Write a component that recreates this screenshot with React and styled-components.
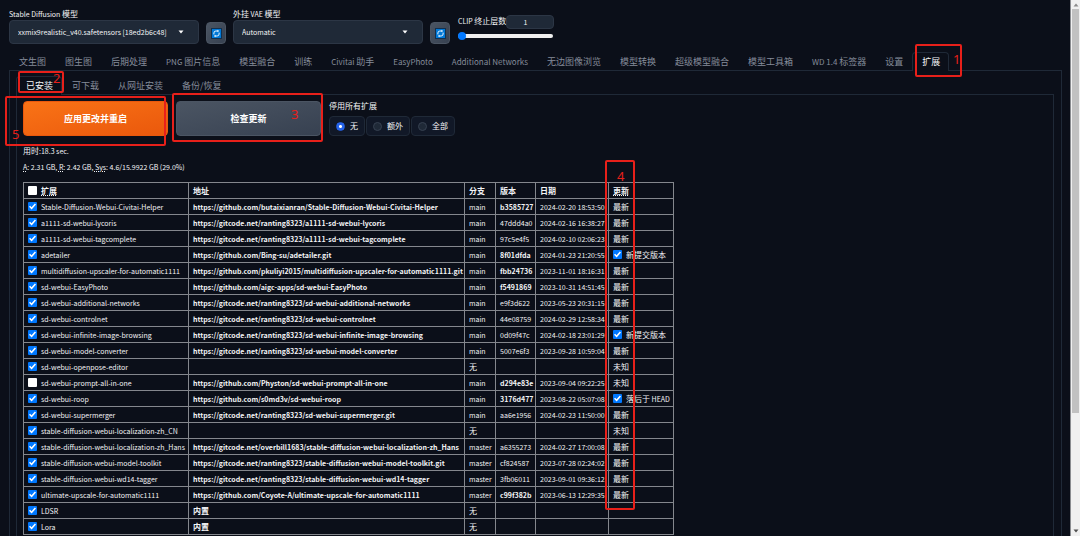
import React, { useState } from 'react';
import styled, { createGlobalStyle, css } from 'styled-components';

const MAIN_TABS = [
  '文生图', '图生图', '后期处理', 'PNG 图片信息', '模型融合', '训练', 'Civitai 助手',
  'EasyPhoto', 'Additional Networks', '无边图像浏览', '模型转换', '超级模型融合',
  '模型工具箱', 'WD 1.4 标签器', '设置', '扩展',
];

const SUB_TABS = ['已安装', '可下载', '从网址安装', '备份/恢复'];

const DISABLE_OPTIONS = ['无', '额外', '全部'];

const COLUMNS = [165, 276, 31, 40, 73, 65];

const GITCODE = 'https://gitcode.net/ranting8323/';

const EXTENSIONS = [
  { name: 'Stable-Diffusion-Webui-Civitai-Helper', url: 'https://github.com/butaixianran/Stable-Diffusion-Webui-Civitai-Helper', branch: 'main', version: 'b3585727', bold: true, date: '2024-02-20 18:53:50', status: '最新' },
  { name: 'a1111-sd-webui-lycoris', url: `${GITCODE}a1111-sd-webui-lycoris`, branch: 'main', version: '47ddd4a0', date: '2024-02-16 16:38:27', status: '最新' },
  { name: 'a1111-sd-webui-tagcomplete', url: `${GITCODE}a1111-sd-webui-tagcomplete`, branch: 'main', version: '97c5e4f5', date: '2024-02-10 02:06:23', status: '最新' },
  { name: 'adetailer', url: 'https://github.com/Bing-su/adetailer.git', branch: 'main', version: '8f01dfda', bold: true, date: '2024-01-23 21:20:55', status: '新提交版本', update: true },
  { name: 'multidiffusion-upscaler-for-automatic1111', url: 'https://github.com/pkuliyi2015/multidiffusion-upscaler-for-automatic1111.git', branch: 'main', version: 'fbb24736', bold: true, date: '2023-11-01 18:16:31', status: '最新' },
  { name: 'sd-webui-EasyPhoto', url: 'https://github.com/aigc-apps/sd-webui-EasyPhoto', branch: 'main', version: 'f5491869', bold: true, date: '2023-10-31 14:51:45', status: '最新' },
  { name: 'sd-webui-additional-networks', url: `${GITCODE}sd-webui-additional-networks`, branch: 'main', version: 'e9f3d622', date: '2023-05-23 20:31:15', status: '最新' },
  { name: 'sd-webui-controlnet', url: `${GITCODE}sd-webui-controlnet`, branch: 'main', version: '44e08759', date: '2024-02-29 12:58:34', status: '最新' },
  { name: 'sd-webui-infinite-image-browsing', url: `${GITCODE}sd-webui-infinite-image-browsing`, branch: 'main', version: '0d09f47c', date: '2024-02-18 23:01:29', status: '新提交版本', update: true },
  { name: 'sd-webui-model-converter', url: `${GITCODE}sd-webui-model-converter`, branch: 'main', version: '5007e6f3', date: '2023-09-28 10:59:04', status: '最新' },
  { name: 'sd-webui-openpose-editor', branch: '无', status: '未知' },
  { name: 'sd-webui-prompt-all-in-one', disabled: true, url: 'https://github.com/Physton/sd-webui-prompt-all-in-one', branch: 'main', version: 'd294e83e', bold: true, date: '2023-09-04 09:22:25', status: '未知' },
  { name: 'sd-webui-roop', url: 'https://github.com/s0md3v/sd-webui-roop', branch: 'main', version: '3176d477', bold: true, date: '2023-08-22 05:07:08', status: '落后于 HEAD', update: true },
  { name: 'sd-webui-supermerger', url: `${GITCODE}sd-webui-supermerger.git`, branch: 'main', version: 'aa6e1956', date: '2024-02-23 11:50:00', status: '最新' },
  { name: 'stable-diffusion-webui-localization-zh_CN', branch: '无', status: '未知' },
  { name: 'stable-diffusion-webui-localization-zh_Hans', url: 'https://gitcode.net/overbill1683/stable-diffusion-webui-localization-zh_Hans', branch: 'master', version: 'a6355273', date: '2024-02-27 17:00:08', status: '最新' },
  { name: 'stable-diffusion-webui-model-toolkit', url: `${GITCODE}stable-diffusion-webui-model-toolkit.git`, branch: 'master', version: 'cf824587', date: '2023-07-28 02:24:02', status: '最新' },
  { name: 'stable-diffusion-webui-wd14-tagger', url: `${GITCODE}stable-diffusion-webui-wd14-tagger`, branch: 'master', version: '3fb06011', date: '2023-09-01 09:36:12', status: '最新' },
  { name: 'ultimate-upscale-for-automatic1111', url: 'https://github.com/Coyote-A/ultimate-upscale-for-automatic1111', branch: 'master', version: 'c99f382b', bold: true, date: '2023-06-13 12:29:35', status: '最新' },
  { name: 'LDSR', builtin: true, branch: '无' },
  { name: 'Lora', builtin: true, branch: '无' },
];

// numbered callouts drawn over the page
const MARKS = [
  { n: 1, x: 915, y: 44, w: 47, h: 33, nx: 36, ny: 5 },
  { n: 2, x: 18, y: 71, w: 46, h: 22, nx: 33, ny: -3 },
  { n: 3, x: 172, y: 93, w: 151, h: 49, nx: 117, ny: 11 },
  { n: 4, x: 605, y: 160, w: 30, h: 350, nx: 10, ny: 6 },
  { n: 5, x: 5, y: 96, w: 161, h: 50, nx: 5, ny: 28 },
];

// latin runs are set one step smaller than the hanzi beside them
function Mixed({ text, size = 7 }) {
  return text
    .split(/([\x20-\x7e]+)/)
    .filter(Boolean)
    .map((part, i) => (
      /^[\x20-\x7e]/.test(part) ? <Latin key={i} $size={size}>{part}</Latin> : part
    ));
}

function SelectField({ id, label, value }) {
  return (
    <Field>
      <FieldLabel htmlFor={id}><Mixed text={label} /></FieldLabel>
      <SelectBox>
        <Select id={id} defaultValue={value}>
          <option>{value}</option>
        </Select>
        <Caret viewBox='0 0 6 4'>
          <path d='M0.5 0.5h5L3 3.5z' fill='#fff' />
        </Caret>
      </SelectBox>
    </Field>
  );
}

function RefreshButton() {
  return (
    <ToolButton aria-label='刷新'>
      <svg width='11' height='11' viewBox='0 0 11 11' fill='none'>
        <rect x='0.5' y='0.5' width='10' height='10' fill='#0078d7' stroke='#12304f' />
        <path d='M2.9 6.4V5a2 2 0 0 1 2-2H7' stroke='#fff' strokeWidth='0.9' />
        <path d='M8.1 4.6V6a2 2 0 0 1-2 2H4' stroke='#fff' strokeWidth='0.9' />
        <path d='M6.5 1.8L8.1 3 6.5 4.2zM4.5 6.8L2.9 8l1.6 1.2z' fill='#fff' />
      </svg>
    </ToolButton>
  );
}

function ExtensionRow({ item }) {
  const Version = item.bold ? 'b' : 'span';

  return (
    <tr>
      <Cell>
        <CheckLabel>
          <Checkbox type='checkbox' defaultChecked={!item.disabled} />
          <Mixed text={item.name} />
        </CheckLabel>
      </Cell>
      <Cell $small={!item.builtin}>
        {item.url && <Link href={item.url}>{item.url}</Link>}
        {item.builtin && <b>内置</b>}
      </Cell>
      <Cell $small={item.branch !== '无'}>{item.branch}</Cell>
      <Cell $small>{item.version && <Version>{item.version}</Version>}</Cell>
      <Cell $small>{item.date}</Cell>
      <Cell>
        {item.update ? (
          <CheckLabel>
            <Checkbox type='checkbox' defaultChecked />
            <span><Mixed text={item.status} /></span>
          </CheckLabel>
        ) : item.status}
      </Cell>
    </tr>
  );
}

export default function App() {
  const [mainTab, setMainTab] = useState('扩展');
  const [subTab, setSubTab] = useState('已安装');

  return (
    <Page>
      <GlobalStyle />
      <Main>
        <QuickSettings>
          <SelectField
            id='checkpoint'
            label='Stable Diffusion 模型'
            value='xxmix9realistic_v40.safetensors [18ed2b6c48]'
          />
          <RefreshButton />
          <SelectField id='vae' label='外挂 VAE 模型' value='Automatic' />
          <RefreshButton />
          <ClipField>
            <ClipHead>
              <FieldLabel htmlFor='clip'><Mixed text='CLIP 终止层数' /></FieldLabel>
              <NumberInput id='clip' defaultValue='1' />
            </ClipHead>
            <Slider type='range' min='1' max='12' defaultValue='1' aria-label='CLIP 终止层数' />
          </ClipField>
        </QuickSettings>
        <TabList role='tablist'>
          {MAIN_TABS.map((tab) => (
            <Tab
              key={tab}
              role='tab'
              aria-selected={tab === mainTab}
              $active={tab === mainTab}
              onClick={() => setMainTab(tab)}
            >
              <Mixed text={tab} size={8} />
            </Tab>
          ))}
        </TabList>
        <OuterPanel>
          <TabList role='tablist'>
            {SUB_TABS.map((tab) => (
              <Tab
                key={tab}
                role='tab'
                aria-selected={tab === subTab}
                $active={tab === subTab}
                onClick={() => setSubTab(tab)}
              >
                {tab}
              </Tab>
            ))}
          </TabList>
          <InnerPanel>
            <Actions>
              <ActionButton $primary>应用更改并重启</ActionButton>
              <ActionButton>检查更新</ActionButton>
              <RadioGroup>
                <Legend>停用所有扩展</Legend>
                <RadioRow>
                  {DISABLE_OPTIONS.map((option, i) => (
                    <RadioLabel key={option}>
                      <Radio type='radio' name='disable' defaultChecked={i === 0} />
                      {option}
                    </RadioLabel>
                  ))}
                </RadioRow>
              </RadioGroup>
            </Actions>
            <Stats>
              <p><Mixed text='用时:18.3 sec.' /></p>
              <p>
                <Latin $size={7}>
                  <abbr>A</abbr>: 2.31 GB, <abbr>R</abbr>: 2.42 GB, <abbr>Sys</abbr>: 4.6/15.9922 GB (29.0%)
                </Latin>
              </p>
            </Stats>
            <Table>
              <colgroup>
                {COLUMNS.map((width, i) => <Col key={i} $width={width} />)}
              </colgroup>
              <thead>
                <tr>
                  <HeadCell>
                    <CheckLabel>
                      <Checkbox type='checkbox' />
                      <abbr>扩展</abbr>
                    </CheckLabel>
                  </HeadCell>
                  <HeadCell>地址</HeadCell>
                  <HeadCell>分支</HeadCell>
                  <HeadCell>版本</HeadCell>
                  <HeadCell>日期</HeadCell>
                  <HeadCell><abbr>更新</abbr></HeadCell>
                </tr>
              </thead>
              <tbody>
                {EXTENSIONS.map((item) => <ExtensionRow key={item.name} item={item} />)}
              </tbody>
            </Table>
          </InnerPanel>
        </OuterPanel>
      </Main>
      <ScrollBar>
        <Arrow viewBox='0 0 6 4'><path d='M0.5 3.5L3 0.5l2.5 3z' fill='#8b8b8b' /></Arrow>
        <Track><Thumb /></Track>
        <Arrow viewBox='0 0 6 4'><path d='M0.5 0.5L3 3.5l2.5-3z' fill='#505050' /></Arrow>
      </ScrollBar>
      {MARKS.map((mark) => (
        <Mark key={mark.n} $mark={mark}>
          <span>{mark.n}</span>
        </Mark>
      ))}
    </Page>
  );
}

const GlobalStyle = createGlobalStyle`
  * {
    box-sizing: border-box;
  }

  body {
    margin: 0;
    background: #0b0f19;
    color: #f3f4f6;
    font-family: 'Noto Sans CJK SC', sans-serif;
    font-size: 8px;
    line-height: 12px;
  }

  button,
  input,
  select {
    margin: 0;
    color: inherit;
    font: inherit;
  }

  abbr {
    text-decoration: underline dotted 1px;
    text-underline-offset: 1px;
  }
`;

const Page = styled.div`
  position: relative;
  display: flex;
  height: 100vh;
  overflow: hidden;
`;

const Main = styled.main`
  display: flex;
  flex: 1;
  flex-direction: column;
  min-width: 0;
  padding: 8px 8px 0 9px;
`;

const Latin = styled.span`
  font-size: ${({ $size }) => $size}px;
  white-space: pre;
`;

const QuickSettings = styled.div`
  display: flex;
  align-items: flex-end;
  gap: 7px;
  margin-bottom: 8px;
`;

const Field = styled.div`
  display: flex;
  flex-direction: column;
  width: 190px;
`;

const FieldLabel = styled.label`
  white-space: nowrap;
`;

const SelectBox = styled.div`
  position: relative;
`;

const Select = styled.select`
  display: block;
  width: 100%;
  height: 24px;
  padding: 0 8px;
  border: 1px solid #2c3645;
  border-radius: 4px;
  background: #1f2937;
  font-size: 7px;
  appearance: none;
`;

const Caret = styled.svg`
  position: absolute;
  top: 10px;
  right: 15px;
  width: 6px;
  height: 4px;
`;

const ToolButton = styled.button`
  display: flex;
  align-items: center;
  justify-content: center;
  width: 20px;
  height: 22px;
  padding: 0;
  border: 1px solid #4b5563;
  border-radius: 4px;
  background: linear-gradient(to bottom right, #4b5563, #374151);
`;

const ClipField = styled.div`
  display: flex;
  flex-direction: column;
  align-self: stretch;
  width: 97px;
  padding: 7px 0 0 1px;
`;

const ClipHead = styled.div`
  display: flex;
  justify-content: space-between;
  height: 14px;
`;

const NumberInput = styled.input`
  flex: none;
  width: 48px;
  height: 14px;
  padding: 0 10px 0 0;
  border: 1px solid #2c3645;
  border-radius: 4px;
  background: #1f2937;
  font-size: 7px;
  text-align: center;
`;

const Slider = styled.input`
  width: 95px;
  height: 8px;
  margin-top: 3px;
  background: none;
  appearance: none;

  &::-webkit-slider-runnable-track {
    height: 4px;
    border-radius: 2px;
    background: #efefef;
  }

  &::-webkit-slider-thumb {
    width: 8px;
    height: 8px;
    margin-top: -2px;
    border-radius: 50%;
    background: #0078ff;
    appearance: none;
  }
`;

const TabList = styled.div`
  display: flex;
`;

const Tab = styled.button`
  flex: none;
  height: 19px;
  margin-bottom: -1px;
  padding: 0 8px 0 9px;
  border: 1px solid transparent;
  border-bottom: 0;
  border-radius: 4px 4px 0 0;
  background: none;
  color: #858c99;
  font-size: 9px;
  white-space: nowrap;

  ${({ $active }) => $active && css`
    z-index: 1;
    border-color: #1f2937;
    background: #0b0f19;
    color: #f3f4f6;
  `}
`;

const OuterPanel = styled.section`
  flex: 1;
  padding: 5px 7px 0 6px;
  border: 1px solid #1f2937;
  border-bottom: 0;
`;

const InnerPanel = styled.section`
  height: 100%;
  padding: 6px;
  border: 1px solid #1f2937;
  border-bottom: 0;
`;

const Actions = styled.div`
  display: flex;
  gap: 8px;
`;

const ActionButton = styled.button`
  width: 145px;
  height: 35px;
  border: 1px solid ${({ $primary }) => ($primary ? '#ea580c' : '#4b5563')};
  border-radius: 4px;
  background: ${({ $primary }) => ($primary
    ? 'linear-gradient(to bottom right, #f97316, #ea580c)'
    : 'linear-gradient(to bottom right, #4b5563, #374151)')};
  color: #fff;
  font-size: 9px;
  font-weight: 700;
`;

const RadioGroup = styled.fieldset`
  margin: 0;
  padding: 0;
  border: 0;
`;

const Legend = styled.legend`
  margin-bottom: 5px;
  padding: 0;
  line-height: 10px;
`;

const RadioRow = styled.div`
  display: flex;
  gap: 1px;
`;

const RadioLabel = styled.label`
  display: flex;
  align-items: center;
  gap: 5px;
  height: 20px;
  padding: 0 6px;
  border: 1px solid #1f2937;
  border-radius: 4px;
  background: #111827;
`;

const Radio = styled.input`
  width: 9px;
  height: 9px;
  border: 1px solid #374151;
  border-radius: 50%;
  background: #1f2937;
  appearance: none;

  &:checked {
    border-color: #2563eb;
    background: radial-gradient(circle, #fff 0 1px, #2563eb 2px);
  }
`;

const Stats = styled.div`
  margin: 7px 0;
  line-height: 16px;

  p {
    height: 16px;
    margin: 0;
  }
`;

const Table = styled.table`
  width: 650px;
  border-collapse: collapse;
  table-layout: fixed;
`;

const Col = styled.col`
  width: ${({ $width }) => $width}px;
`;

const Cell = styled.td`
  height: 16px;
  padding: 0 0 0 4px;
  border: 1px solid #84878d;
  font-size: ${({ $small }) => ($small ? 7 : 8)}px;
  line-height: 14px;
  white-space: nowrap;
`;

const HeadCell = styled(Cell).attrs({ as: 'th' })`
  font-weight: 700;
  text-align: left;
`;

const CheckLabel = styled.label`
  display: flex;
  align-items: center;
  gap: 4px;
  height: 14px;
`;

const Checkbox = styled.input`
  position: relative;
  flex: none;
  width: 9px;
  height: 9px;
  border-radius: 1px;
  background: #fff;
  appearance: none;

  &:checked {
    background: #0078ff;
  }

  &:checked::before {
    content: '';
    position: absolute;
    inset: 1px;
    background: #fff;
    clip-path: polygon(0 55%, 16% 40%, 36% 60%, 84% 6%, 100% 22%, 38% 92%);
  }
`;

const Link = styled.a`
  color: inherit;
  font-weight: 700;
  text-decoration: none;
`;

const ScrollBar = styled.div`
  display: flex;
  flex: none;
  flex-direction: column;
  align-items: center;
  width: 10px;
  padding: 3px 1px;
  border-left: 1px solid #8a8c90;
  background: #f0f0f0;
`;

const Arrow = styled.svg`
  width: 6px;
  height: 4px;
`;

const Track = styled.div`
  flex: 1;
  width: 7px;
  padding: 2px 0;
`;

const Thumb = styled.div`
  height: 78%;
  background: #c1c1c1;
`;

const Mark = styled.div`
  position: absolute;
  z-index: 2;
  top: ${({ $mark }) => $mark.y}px;
  left: ${({ $mark }) => $mark.x}px;
  width: ${({ $mark }) => $mark.w}px;
  height: ${({ $mark }) => $mark.h}px;
  border: 2px solid #e8201a;
  border-radius: 2px;
  color: #e8201a;
  font-family: 'Noto Sans', sans-serif;
  font-size: 13px;
  line-height: 16px;
  pointer-events: none;

  span {
    position: absolute;
    top: ${({ $mark }) => $mark.ny}px;
    left: ${({ $mark }) => $mark.nx}px;
  }
`;
